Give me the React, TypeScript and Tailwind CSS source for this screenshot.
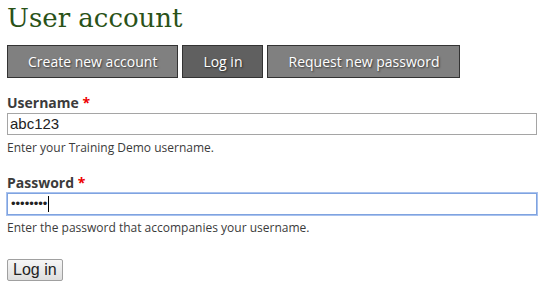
export default function App() {
  const tabs = [
    { label: 'Create new account', active: false },
    { label: 'Log in', active: true },
    { label: 'Request new password', active: false },
  ];

  return (
    <div className="min-h-screen bg-white px-[7px] pt-[2px] font-['Open_Sans',sans-serif] text-[#3b3b3b]">
      <h1 className="font-['DejaVu_Serif',serif] text-[26px] leading-[32px] text-[#2a5218]">User account</h1>

      <div className="mt-[11px] flex gap-[4px]">
        {tabs.map((t) => (
          <a
            key={t.label}
            href="#"
            className={`flex h-[33px] items-center border border-[#333] px-[20px] text-[14px] text-white [text-shadow:1px_1px_2px_rgba(0,0,0,0.6)] ${
              t.active ? 'bg-[#606060]' : 'bg-[#808080]'
            }`}
          >
            {t.label}
          </a>
        ))}
      </div>

      <form className="mt-[16px]">
        <div>
          <label className="block text-[14px] font-bold leading-[18px]">
            Username <span className="text-[#e00]">*</span>
          </label>
          <input
            type="text"
            defaultValue="abc123"
            className="mt-[1px] block h-[22px] w-[530px] border border-[#a5a5a5] px-[2px] font-['Liberation_Sans',sans-serif] text-[15px] text-[#222] outline-none"
          />
          <p className="mt-[5px] text-[12px] leading-[15px]">Enter your Training Demo username.</p>
        </div>

        <div className="mt-[19px]">
          <label className="block text-[14px] font-bold leading-[18px]">
            Password <span className="text-[#e00]">*</span>
          </label>
          <div className="mt-[1px] flex h-[22px] w-[530px] items-center border border-[#7fa3e0] pl-[3px] shadow-[0_0_0_1px_#a9c2ee]">
            <span className="font-['Liberation_Sans',sans-serif] text-[13px] leading-[18px] text-[#222]">••••••••</span>
            <span className="ml-[1px] h-[16px] w-px bg-black" />
          </div>
          <p className="mt-[5px] text-[12px] leading-[15px]">Enter the password that accompanies your username.</p>
        </div>

        <button
          type="button"
          className="mt-[24px] block h-[22px] rounded-[2px] border border-[#a0a0a0] bg-gradient-to-b from-[#f6f6f6] to-[#dedede] px-[5px] font-['Liberation_Sans',sans-serif] text-[16px] leading-[18px] text-[#222]"
        >
          Log in
        </button>
      </form>
    </div>
  );
}
